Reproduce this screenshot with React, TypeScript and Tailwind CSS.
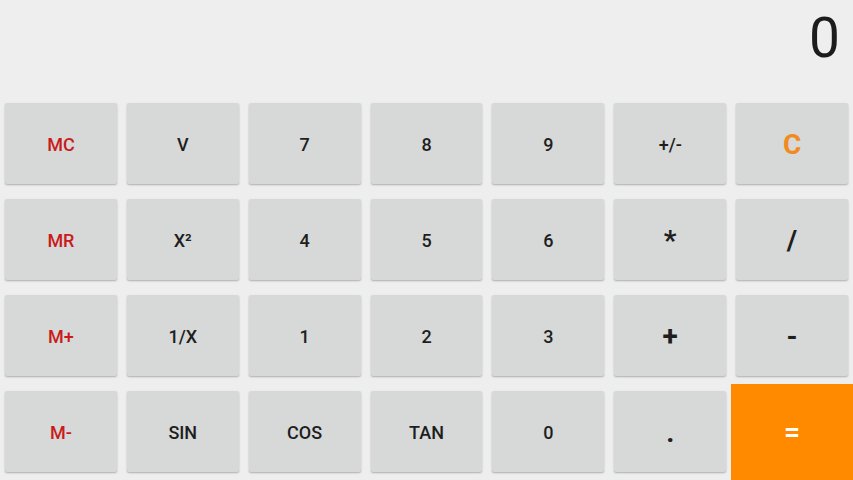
type Key = { label: string; kind?: 'mem' | 'op' | 'clear' | 'eq' };

const rows: Key[][] = [
  [{ label: 'MC', kind: 'mem' }, { label: 'V' }, { label: '7' }, { label: '8' }, { label: '9' }, { label: '+/-' }, { label: 'C', kind: 'clear' }],
  [{ label: 'MR', kind: 'mem' }, { label: 'X²' }, { label: '4' }, { label: '5' }, { label: '6' }, { label: '*', kind: 'op' }, { label: '/', kind: 'op' }],
  [{ label: 'M+', kind: 'mem' }, { label: '1/X' }, { label: '1' }, { label: '2' }, { label: '3' }, { label: '+', kind: 'op' }, { label: '-', kind: 'op' }],
  [{ label: 'M-', kind: 'mem' }, { label: 'SIN' }, { label: 'COS' }, { label: 'TAN' }, { label: '0' }, { label: '.', kind: 'op' }, { label: '=', kind: 'eq' }],
];

function CalcKey({ k }: { k: Key }) {
  if (k.kind === 'eq') {
    return (
      <div className="flex items-center justify-center bg-[#ff8a00] text-white text-[28px] font-bold">
        {k.label}
      </div>
    );
  }

  let text = 'text-[18px] font-medium text-[#1e1e1e]';
  if (k.kind === 'mem') text = 'text-[18px] font-medium text-[#c91b1b]';
  if (k.kind === 'op') text = 'text-[28px] font-bold text-[#1e1e1e]';
  if (k.kind === 'clear') text = 'text-[28px] font-bold text-[#f28a1c]';

  return (
    <div className="pl-[5px] pr-[5px] pt-[7px] pb-[8px] flex">
      <button className={`flex-1 flex items-center justify-center pt-[2px] rounded-[2px] bg-[#d7d8d8] shadow-[0_1px_2px_rgba(0,0,0,0.28)] ${text}`}>
        {k.label}
      </button>
    </div>
  );
}

export default function App() {
  return (
    <div className="w-[853px] h-[480px] flex flex-col bg-[#eeeeee] overflow-hidden" style={{ fontFamily: 'Roboto, "Noto Sans", sans-serif' }}>
      {/* Display */}
      <div className="h-[96px] flex justify-end items-start pr-[13px] pt-[2px]">
        <span className="text-[55px] leading-[72px] text-[#1c1c1c] font-normal">0</span>
      </div>

      {/* Keypad */}
      <div className="flex-1 grid grid-cols-7 grid-rows-4">
        {rows.flat().map((k, i) => (
          <CalcKey key={i} k={k} />
        ))}
      </div>
    </div>
  );
}
